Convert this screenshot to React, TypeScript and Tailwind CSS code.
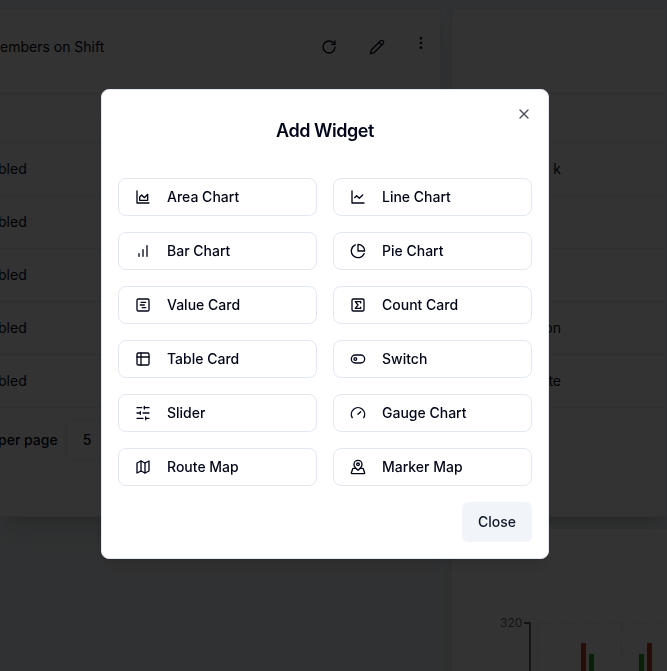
import React from "react";

type IconProps = { children: React.ReactNode; size?: string };

function Icon({ children, size = "size-4" }: IconProps) {
  return (
    <svg
      className={`${size} shrink-0`}
      viewBox="0 0 24 24"
      fill="none"
      stroke="currentColor"
      strokeWidth="2"
      strokeLinecap="round"
      strokeLinejoin="round"
      aria-hidden="true"
    >
      {children}
    </svg>
  );
}

const widgets: { label: string; icon: React.ReactNode }[] = [
  {
    label: "Area Chart",
    icon: (
      <>
        <path d="M3 3v18h18" />
        <path d="M7 12v5h12V8l-5 5-4-4Z" />
      </>
    ),
  },
  {
    label: "Line Chart",
    icon: (
      <>
        <path d="M3 3v18h18" />
        <path d="m19 9-5 5-4-4-3 3" />
      </>
    ),
  },
  {
    label: "Bar Chart",
    icon: (
      <>
        <path d="M12 20V10" />
        <path d="M18 20V4" />
        <path d="M6 20v-4" />
      </>
    ),
  },
  {
    label: "Pie Chart",
    icon: (
      <>
        <path d="M21.21 15.89A10 10 0 1 1 8 2.83" />
        <path d="M22 12A10 10 0 0 0 12 2v10z" />
      </>
    ),
  },
  {
    label: "Value Card",
    icon: (
      <>
        <rect width="18" height="18" x="3" y="3" rx="2" />
        <path d="M9 8h7" />
        <path d="M8 12h6" />
        <path d="M11 16h5" />
      </>
    ),
  },
  {
    label: "Count Card",
    icon: (
      <>
        <rect width="18" height="18" x="3" y="3" rx="2" />
        <path d="M16 8.9V7H8l4 5-4 5h8v-1.9" />
      </>
    ),
  },
  {
    label: "Table Card",
    icon: (
      <>
        <rect width="18" height="18" x="3" y="3" rx="2" />
        <path d="M3 9h18" />
        <path d="M9 3v18" />
      </>
    ),
  },
  {
    label: "Switch",
    icon: (
      <>
        <rect width="20" height="12" x="2" y="6" rx="6" />
        <circle cx="8" cy="12" r="2" />
      </>
    ),
  },
  {
    label: "Slider",
    icon: (
      <>
        <path d="M21 4h-7M10 4H3M21 12h-9M8 12H3M21 20h-5M12 20H3" />
        <path d="M14 2v4M8 10v4M16 18v4" />
      </>
    ),
  },
  {
    label: "Gauge Chart",
    icon: (
      <>
        <path d="m12 14 4-4" />
        <path d="M3.34 19a10 10 0 1 1 17.32 0" />
      </>
    ),
  },
  {
    label: "Route Map",
    icon: (
      <>
        <path d="m3 6 6-3 6 3 6-3v15l-6 3-6-3-6 3Z" />
        <path d="M9 3v15M15 6v15" />
      </>
    ),
  },
  {
    label: "Marker Map",
    icon: (
      <>
        <path d="M18 8c0 4.5-6 9-6 9s-6-4.5-6-9a6 6 0 0 1 12 0" />
        <circle cx="12" cy="8" r="2" />
        <path d="M8.835 14H5a1 1 0 0 0-.9.7l-2 6c-.1.1-.1.2-.1.3 0 .6.4 1 1 1h18c.6 0 1-.4 1-1 0-.1 0-.2-.1-.3l-2-6a1 1 0 0 0-.9-.7h-3.835" />
      </>
    ),
  },
];

function DataTable({ rows, className }: { rows: string[]; className: string }) {
  return (
    <table className="w-full border-collapse">
      <thead>
        <tr className="h-[49px] border-y border-slate-200">
          <th />
        </tr>
      </thead>
      <tbody>
        {rows.map((row, i) => (
          <tr key={i} className="h-[53px] border-b border-slate-200">
            <td className="p-0">
              <div className={className}>{row}</div>
            </td>
          </tr>
        ))}
      </tbody>
    </table>
  );
}

function ShiftCard() {
  return (
    <section className="h-[509px] w-[441px] shrink-0 border-y border-r border-slate-200 bg-white shadow-xl">
      <header className="flex h-[84px] items-start justify-between pr-[11px]">
        <h3 className="pt-7 leading-5">embers on Shift</h3>
        <div className="flex pt-[30px]">
          <button aria-label="Refresh" className="mr-8 h-4">
            <Icon>
              <path d="M21 12a9 9 0 1 1-9-9c2.52 0 4.93 1 6.74 2.74L21 8" />
              <path d="M21 3v5h-5" />
            </Icon>
          </button>
          <button aria-label="Edit" className="mr-7 h-4">
            <Icon>
              <path d="M17 3a2.85 2.83 0 1 1 4 4L7.5 20.5 2 22l1.5-5.5Z" />
              <path d="m15 5 4 4" />
            </Icon>
          </button>
          <button aria-label="More" className="-mt-1 h-4">
            <Icon>
              <circle cx="12" cy="12" r="1" />
              <circle cx="12" cy="5" r="1" />
              <circle cx="12" cy="19" r="1" />
            </Icon>
          </button>
        </div>
      </header>
      <DataTable rows={["bled", "bled", "bled", "bled", "bled"]} className="-ml-0.5" />
      <div className="mt-3 -ml-0.5 flex items-center gap-2 font-medium">
        <label htmlFor="rows">per page</label>
        <select
          id="rows"
          defaultValue="5"
          className="h-10 w-[70px] appearance-none rounded-md border border-slate-200 bg-white px-4"
        >
          <option>5</option>
        </select>
      </div>
    </section>
  );
}

function BarChartCard() {
  return (
    <section className="grow border-l border-slate-200 bg-white pt-[82px] shadow-xl">
      <svg width="215" height="64" viewBox="0 0 215 64" aria-label="Bar chart">
        <path d="M85 12H215M85.500 12V64M169.500 12V64" stroke="#ddd" strokeDasharray="3 3" fill="none" />
        <path d="M72 12h6V64" stroke="#666" strokeWidth="2" fill="none" />
        <text x="48" y="16" fontSize="12" fill="#666">
          320
        </text>
        <path d="M129 32h5v32h-5zM195 32h5v32h-5z" fill="#b8402e" />
        <path d="M137 43h5v21h-5zM187 43h5v21h-5z" fill="#2f9a2f" />
      </svg>
    </section>
  );
}

export default function App() {
  return (
    <div className="h-screen overflow-hidden bg-slate-100 font-['Inter',sans-serif] text-sm text-slate-950">
      <main className="flex h-full gap-2.5 pt-2">
        <ShiftCard />
        <div className="flex grow flex-col gap-3">
          <section className="h-[509px] shrink-0 border border-slate-200 bg-white shadow-xl">
            <div className="h-[84px]" />
            <DataTable rows={["k", "", "", "on", "te"]} className="w-[109px] text-right" />
          </section>
          <BarChartCard />
        </div>
      </main>

      <div className="fixed inset-0 flex items-center justify-center bg-black/80 pr-[17px] pb-[23px]">
        <div
          role="dialog"
          aria-modal="true"
          aria-labelledby="dialog-title"
          className="relative w-full max-w-md rounded-lg border border-slate-200 bg-white p-4 shadow-lg"
        >
          <h2
            id="dialog-title"
            className="mb-[22px] py-4 text-center text-lg leading-none font-semibold tracking-tight"
          >
            Add Widget
          </h2>
          <div className="grid grid-cols-2 gap-4">
            {widgets.map((widget) => (
              <button
                key={widget.label}
                className="flex h-[38px] items-center gap-4 rounded-lg border border-slate-200 px-4 font-medium"
              >
                <Icon>{widget.icon}</Icon>
                {widget.label}
              </button>
            ))}
          </div>
          <div className="mt-4 flex justify-end">
            <button className="h-10 rounded-md bg-slate-100 px-4 font-medium text-slate-900">Close</button>
          </div>
          <button aria-label="Close dialog" className="absolute top-4 right-4 opacity-70">
            <Icon>
              <path d="M18 6 6 18" />
              <path d="m6 6 12 12" />
            </Icon>
          </button>
        </div>
      </div>
    </div>
  );
}
